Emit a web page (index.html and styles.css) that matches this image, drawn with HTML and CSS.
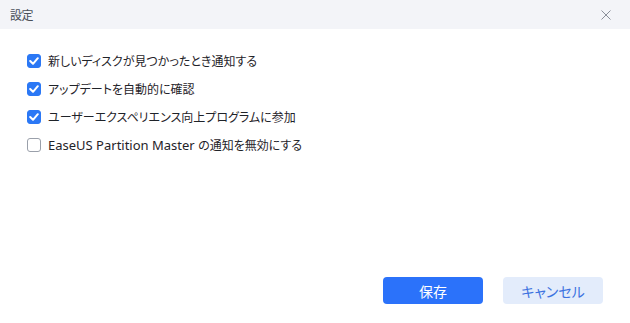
FILE: index.html
```html
<!DOCTYPE html>
<html lang="ja">
<head>
<meta charset="utf-8">
<link rel="stylesheet" href="styles.css">
</head>
<body>
<div class="dialog">
  <div class="header">
    <span class="title">設定</span>
    <svg class="close" width="10" height="10" viewBox="0 0 10 10"><path d="M0.5 0.5L9.5 9.5M9.5 0.5L0.5 9.5" stroke="#8a8f99" stroke-width="1" fill="none"/></svg>
  </div>
  <div class="body">
    <label class="row"><span class="cb on"><svg width="10" height="8" viewBox="0 0 10 8"><path d="M1.2 4L4 6.8L8.8 1.2" stroke="#fff" stroke-width="2" fill="none" stroke-linecap="round" stroke-linejoin="round"/></svg></span><span class="txt">新しいディスクが見つかったとき通知する</span></label>
    <label class="row"><span class="cb on"><svg width="10" height="8" viewBox="0 0 10 8"><path d="M1.2 4L4 6.8L8.8 1.2" stroke="#fff" stroke-width="2" fill="none" stroke-linecap="round" stroke-linejoin="round"/></svg></span><span class="txt">アップデートを自動的に確認</span></label>
    <label class="row"><span class="cb on"><svg width="10" height="8" viewBox="0 0 10 8"><path d="M1.2 4L4 6.8L8.8 1.2" stroke="#fff" stroke-width="2" fill="none" stroke-linecap="round" stroke-linejoin="round"/></svg></span><span class="txt">ユーザーエクスペリエンス向上プログラムに参加</span></label>
    <label class="row"><span class="cb"></span><span class="txt"><span class="lat">EaseUS Partition Master </span>の通知を無効にする</span></label>
  </div>
  <div class="footer">
    <button class="btn primary">保存</button>
    <button class="btn secondary">キャンセル</button>
  </div>
</div>
</body>
</html>
```
FILE: styles.css
```css
* { box-sizing: border-box; }
html, body { margin: 0; padding: 0; background: #fff; }
body {
  width: 630px; height: 323px; overflow: hidden;
  font-family: "Noto Sans", "Noto Sans CJK JP", sans-serif;
  color: #2b2f36;
}
.dialog { display: flex; flex-direction: column; height: 323px; }
.header {
  height: 29px; background: #f3f4f8;
  display: flex; align-items: center; justify-content: space-between;
  padding: 0 19px 0 10px;
}
.title { font-size: 12px; color: #4a4f58; letter-spacing: -0.5px; }
.close { display: block; }
.body {
  padding: 25px 0 0 27px;
  display: flex; flex-direction: column; gap: 14px;
}
.row { display: flex; align-items: center; height: 14px; }
.cb {
  width: 14px; height: 14px; border-radius: 3px;
  border: 1px solid #9aa0aa; background: #fff;
  display: flex; align-items: center; justify-content: center;
  margin-right: 7px; flex: none;
}
.cb.on { background: #2b78f5; border-color: #2b78f5; }
.cb svg { display: block; }
.txt { font-size: 12px; color: #1f2329; font-feature-settings: "palt"; white-space: nowrap; }
.lat { font-family: "Noto Sans", sans-serif; font-size: 13px; letter-spacing: 0; white-space: pre; }
.footer {
  margin-top: auto; padding: 0 27px 19px 0;
  display: flex; justify-content: flex-end; gap: 20px;
}
.btn {
  width: 100px; height: 27px; border: none; border-radius: 4px;
  font-family: "Noto Sans", "Noto Sans CJK JP", sans-serif;
  font-size: 14px; padding: 0; font-feature-settings: "palt";
}
.primary { background: #2b72fa; color: #fff; }
.secondary { background: #e3ecfb; color: #3b72e0; }
```
